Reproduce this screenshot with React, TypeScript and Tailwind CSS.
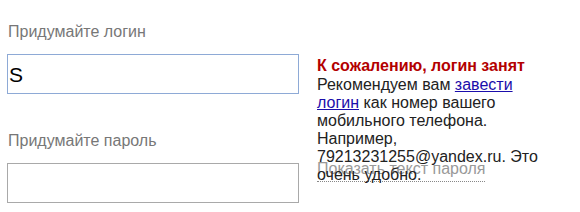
export default function App() {
  return (
    <div className="relative w-[580px] h-[212px] overflow-hidden bg-white font-['Liberation_Sans',Arial,sans-serif]">
      <div className="flex flex-col pl-[7px] pt-[23px] w-[299px]">
        <label className="pl-[1px] text-[16px] leading-[18px] text-[#777]">
          Придумайте логин
        </label>
        <div className="mt-[13px] h-[40px] w-[292px] border border-[#8eaad6] bg-white pl-[1px] flex items-center">
          <span className="text-[21px] leading-none text-black">S</span>
        </div>

        <label className="pl-[1px] mt-[38px] text-[16px] leading-[18px] text-[#777]">
          Придумайте пароль
        </label>
        <div className="mt-[13px] h-[40px] w-[292px] border border-[#a9a9a9] bg-white" />
      </div>

      <div className="absolute left-[317px] top-[160px] pb-[3px] text-[16px] leading-[18px] text-[#999] border-b border-dotted border-[#888]">
        Показать текст пароля
      </div>

      <div className="absolute left-[317px] top-[57px] w-[228px] text-[16px] leading-[18px] text-[#222]">
        <div className="mb-[1px] font-bold text-[#b30000]">К сожалению, логин занят</div>
        <div>
          Рекомендуем вам{" "}
          <a href="#" className="text-[#1a0dab] underline">
            завести логин
          </a>{" "}
          как номер вашего мобильного телефона. Например, 79213231255@yandex.ru. Это очень удобно.
        </div>
      </div>
    </div>
  );
}
